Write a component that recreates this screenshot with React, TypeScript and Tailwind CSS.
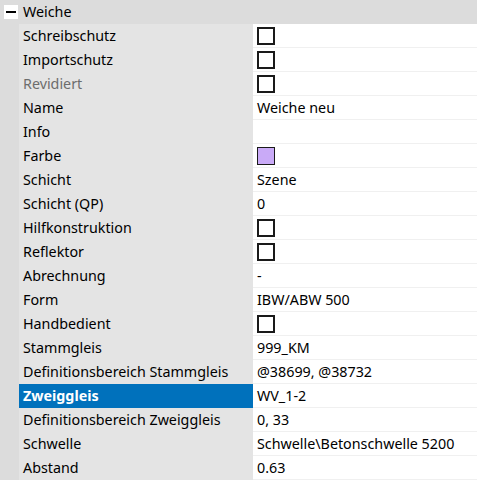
const rows: { label: string; value?: string; kind?: "check" | "color"; muted?: boolean; selected?: boolean }[] = [
  { label: "Schreibschutz", kind: "check" },
  { label: "Importschutz", kind: "check" },
  { label: "Revidiert", kind: "check", muted: true },
  { label: "Name", value: "Weiche neu" },
  { label: "Info", value: "" },
  { label: "Farbe", kind: "color" },
  { label: "Schicht", value: "Szene" },
  { label: "Schicht (QP)", value: "0" },
  { label: "Hilfkonstruktion", kind: "check" },
  { label: "Reflektor", kind: "check" },
  { label: "Abrechnung", value: "-" },
  { label: "Form", value: "IBW/ABW 500" },
  { label: "Handbedient", kind: "check" },
  { label: "Stammgleis", value: "999_KM" },
  { label: "Definitionsbereich Stammgleis", value: "@38699, @38732" },
  { label: "Zweiggleis", value: "WV_1-2", selected: true },
  { label: "Definitionsbereich Zweiggleis", value: "0, 33" },
  { label: "Schwelle", value: "Schwelle\\Betonschwelle 5200" },
  { label: "Abstand", value: "0.63" },
];

export default function App() {
  return (
    <div className="w-[477px] h-[482px] bg-white text-[14.3px] text-black font-['Noto_Sans',sans-serif] overflow-hidden">
      <div className="flex h-[24px] items-center bg-[#dcdcdc]">
        <div className="w-[19px] flex justify-start pl-[4px]">
          <div className="w-[14px] h-[14px] bg-white flex items-center justify-center">
            <div className="w-[10px] h-[2px] bg-black" />
          </div>
        </div>
        <span className="pl-[4px] leading-none">Weiche</span>
      </div>
      {rows.map((row) => (
        <div key={row.label} className="flex h-[24px]">
          <div className="w-[19px] bg-[#dcdcdc]" />
          <div
            className={
              row.selected
                ? "w-[234px] flex items-center pl-[4px] bg-[#0071bc] text-white font-bold"
                : row.muted
                ? "w-[234px] flex items-center pl-[4px] bg-[#e4e4e4] text-[#6d6d6d]"
                : "w-[234px] flex items-center pl-[4px] bg-[#e4e4e4]"
            }
          >
            {row.label}
          </div>
          <div className="flex-1 flex items-center pl-[4px] bg-white border-b border-[#f0f0f0]">
            {row.kind === "check" && (
              <div className="w-[18px] h-[18px] mt-[1px] border-2 border-[#1a1a1a] bg-white" />
            )}
            {row.kind === "color" && (
              <div className="w-[18px] h-[18px] mt-[1px] border border-[#1a1a1a] bg-[#c9aaf7]" />
            )}
            {!row.kind && <span>{row.value}</span>}
          </div>
        </div>
      ))}
    </div>
  );
}
